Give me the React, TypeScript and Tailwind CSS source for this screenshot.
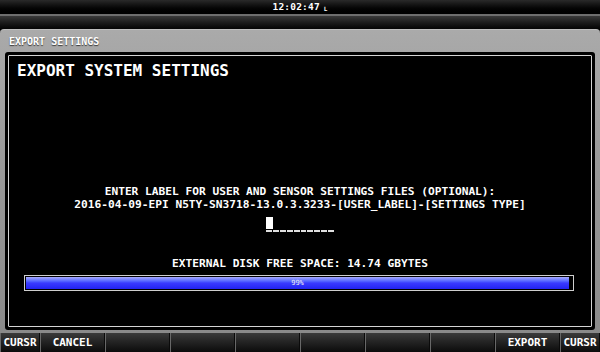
export default function App() {
  const keys = [
    { label: "CURSR", w: "w-[40px]" },
    { label: "CANCEL", w: "w-[65px]" },
    { label: "", w: "w-[65px]" },
    { label: "", w: "w-[65px]" },
    { label: "", w: "w-[65px]" },
    { label: "", w: "w-[65px]" },
    { label: "", w: "w-[65px]" },
    { label: "", w: "w-[65px]" },
    { label: "EXPORT", w: "w-[65px]" },
    { label: "CURSR", w: "w-[40px]" },
  ];

  return (
    <div className="w-[600px] h-[352px] bg-black flex flex-col overflow-hidden font-['DejaVu_Sans_Mono',monospace] text-white">
      {/* status bar */}
      <div className="h-[14px] bg-gradient-to-b from-[#2a2a2a] via-[#0a0a0a] to-[#000] flex items-center justify-center">
        <span className="text-[9.5px] font-bold leading-none tracking-[0.2px]">12:02:47</span>
        <span className="text-[6px] font-bold leading-none ml-[4px] mt-[3px]">L</span>
      </div>
      <div className="h-[2px] bg-[#6e6e6e]" />
      <div className="h-[13px] bg-gradient-to-b from-[#3a3a3a] via-[#1c1c1c] to-[#050505]" />

      {/* page panel */}
      <div className="h-[304px] rounded-t-[4px] bg-gradient-to-b from-[#aaaaaa] via-[#969696] to-[#8a8a8a] border-t border-[#bdbdbd] px-[5px] pb-[3px] flex flex-col">
        <div className="h-[22px] flex items-center pl-[4px] pt-[2px]">
          <span className="text-[10px] leading-none font-bold text-white [text-shadow:0_1px_1px_#3a3a3a]">EXPORT SETTINGS</span>
        </div>
        <div className="flex-1 bg-black rounded-[3px] p-[3px] flex flex-col">
          <div className="flex-1 border border-[#d4d4d4] rounded-[1px] flex flex-col">
            <div className="pl-[8px] pt-[6px] text-[16px] leading-[18px] font-bold">EXPORT SYSTEM SETTINGS</div>

            <div className="mt-[105px] flex flex-col items-center text-[11.2px] leading-[13px] font-bold">
              <div>ENTER LABEL FOR USER AND SENSOR SETTINGS FILES (OPTIONAL):</div>
              <div>2016-04-09-EPI N5TY-SN3718-13.0.3.3233-[USER_LABEL]-[SETTINGS TYPE]</div>
              <div className="mt-[5px] h-[16px] w-[68px] relative flex items-end gap-[1px]">
                {Array.from({ length: 10 }).map((_, i) => (
                  <div key={i} className="w-[6px] h-[2px] bg-[#e0e0e0]" />
                ))}
                <div className="absolute left-[0px] top-[1px] w-[7px] h-[12px] bg-white" />
              </div>
              <div className="mt-[25px]">EXTERNAL DISK FREE SPACE: 14.74 GBYTES</div>
            </div>

            <div className="mt-[5px] ml-[15px] w-[550px] h-[16px] border border-[#cfcfcf] bg-black p-[1px] flex">
              <div className="w-[calc(100%-3px)] h-full bg-gradient-to-b from-[#a8a8ff] via-[#3a3aff] to-[#2222f0] flex items-center justify-center">
                <span className="text-[7px] leading-none text-[#f0f0f0]">99%</span>
              </div>
            </div>
          </div>
        </div>
      </div>

      {/* softkeys */}
      <div className="h-[19px] flex bg-[#5a5a5a]">
        {keys.map((k, i) => (
          <div
            key={i}
            className={`${k.w} h-full border-l border-[#686868] border-r border-r-[#0a0a0a] bg-gradient-to-b from-[#3a3a3a] via-[#222] to-[#0c0c0c] flex items-center justify-center`}
          >
            <span className="text-[11px] leading-none font-bold text-white">{k.label}</span>
          </div>
        ))}
      </div>
    </div>
  );
}
